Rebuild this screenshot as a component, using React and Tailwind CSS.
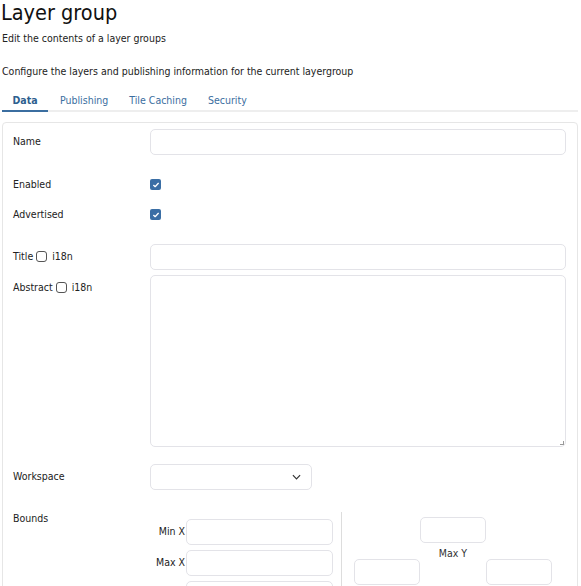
import React from "react";

const font = { fontFamily: '"DejaVu Sans Condensed", "DejaVu Sans", sans-serif' };

function Check() {
  return (
    <span className="inline-flex w-[11px] h-[11px] rounded-[2px] bg-[#3a6ea5] items-center justify-center">
      <svg viewBox="0 0 12 12" className="w-[8px] h-[8px]" fill="none" stroke="white" strokeWidth="2" strokeLinecap="round" strokeLinejoin="round">
        <path d="M2.5 6.5l2.2 2L9.5 3.5" />
      </svg>
    </span>
  );
}

function EmptyBox() {
  return <span className="inline-block w-[11px] h-[11px] rounded-[3px] border border-[#555] bg-white" />;
}

export default function App() {
  const input = "border border-[#e3e3e8] rounded-[5px] bg-white";
  return (
    <div className="w-[581px] h-[586px] overflow-hidden bg-white text-[#222] text-[10.5px]" style={font}>
      <h1 className="text-[21.5px] leading-[26px] pl-[1px] text-[#111]">Layer group</h1>
      <p className="pl-[2px] mt-[4px] leading-[16px]">Edit the contents of a layer groups</p>
      <p className="pl-[2px] mt-[17px] leading-[16px]">Configure the layers and publishing information for the current layergroup</p>

      <div className="mt-[14px] mx-[2px] w-[576px] flex border-b-2 border-[#eeeeee] text-[#3b6ea0]">
        <div className="w-[46px] text-center pb-[1px] border-b-2 border-[#3b6ea0] -mb-[2px] font-bold text-[#2e5f8f]">Data</div>
        <div className="ml-[12px] pb-[1px]">Publishing</div>
        <div className="ml-[21px] pb-[1px]">Tile Caching</div>
        <div className="ml-[21px] pb-[1px]">Security</div>
      </div>

      <div className="mt-[10px] ml-[2px] w-[576px] border border-[#e6e6e6] rounded-[4px] pl-[10px] pr-[11px] pt-[6px] h-[500px]">
        <div className="flex items-center h-[26px]">
          <div className="w-[137px]">Name</div>
          <div className={`flex-1 h-[26px] ${input}`} />
        </div>

        <div className="flex items-center mt-[23px] h-[14px]">
          <div className="w-[137px]">Enabled</div>
          <Check />
        </div>
        <div className="flex items-center mt-[16px] h-[14px]">
          <div className="w-[137px]">Advertised</div>
          <Check />
        </div>

        <div className="flex items-center mt-[22px] h-[26px]">
          <div className="w-[137px] flex items-center gap-[3px]">Title <EmptyBox /> <span className="ml-[2px]">i18n</span></div>
          <div className={`flex-1 h-[26px] ${input}`} />
        </div>

        <div className="flex mt-[5px]">
          <div className="w-[137px] flex items-center gap-[3px] h-[26px]">Abstract <EmptyBox /> <span className="ml-[2px]">i18n</span></div>
          <div className={`flex-1 h-[172px] ${input} relative`}>
            <span className="absolute right-[1px] bottom-[1px] w-[4px] h-[4px] border-r border-b border-[#999]" />
          </div>
        </div>

        <div className="flex items-center mt-[17px] h-[26px]">
          <div className="w-[137px]">Workspace</div>
          <div className={`w-[162px] h-[26px] ${input} flex items-center justify-end pr-[10px]`}>
            <svg viewBox="0 0 10 6" className="w-[9px] h-[6px]" fill="none" stroke="#333" strokeWidth="1.3">
              <path d="M1 1l4 4 4-4" />
            </svg>
          </div>
        </div>

        <div className="flex mt-[22px]">
          <div className="w-[137px] leading-[12px]">Bounds</div>
          <div className="flex">
            <div className="w-[192px] border-r border-[#dddddd] pt-[7px] pr-[8px] flex flex-col gap-[5px] items-end h-[80px]">
              <div className="flex items-center">
                <span className="mr-[1px]">Min X</span>
                <div className={`w-[147px] h-[26px] ${input}`} />
              </div>
              <div className="flex items-center">
                <span className="mr-[1px]">Max X</span>
                <div className={`w-[147px] h-[26px] ${input}`} />
              </div>
              <div className="flex items-center">
                <div className={`w-[147px] h-[26px] ${input}`} />
              </div>
            </div>
            <div className="pl-[12px] pt-[5px] grid grid-cols-[66px_66px_66px]">
              <div />
              <div className={`h-[26px] ${input}`} />
              <div />
              <div className={`h-[26px] ${input} mt-[10px]`} />
              <div className="-mt-[3px] text-center text-[#333]">Max Y</div>
              <div className={`h-[26px] ${input} mt-[10px]`} />
            </div>
          </div>
        </div>
      </div>
    </div>
  );
}
